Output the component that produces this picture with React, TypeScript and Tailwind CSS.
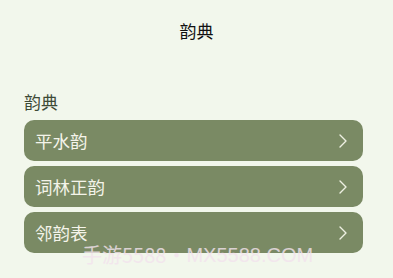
import React from "react";

const items = ["平水韵", "词林正韵", "邻韵表"];

function Chevron() {
  return (
    <svg width="10" height="16" viewBox="0 0 10 16" fill="none" className="shrink-0">
      <path d="M2 2 L8 8 L2 14" stroke="#eef0e2" strokeWidth="1.4" strokeLinecap="round" strokeLinejoin="round" />
    </svg>
  );
}

export default function App() {
  return (
    <div
      className="relative w-[393px] h-[278px] overflow-hidden bg-[#f2f7ec]"
      style={{ fontFamily: '"Noto Sans CJK SC", "Noto Sans", sans-serif' }}
    >
      <div className="h-[62px] flex items-center justify-center">
        <span className="text-[17px] leading-none text-[#111111] mt-[-2px]">韵典</span>
      </div>
      <div className="pl-6 pr-[30px]">
        <div className="h-[58px] flex items-end pb-[10px]">
          <span className="text-[17px] leading-none text-[#3e4a36]">韵典</span>
        </div>
        <div className="flex flex-col gap-[5px]">
          {items.map((t) => (
            <div
              key={t}
              className="h-[41px] rounded-[10px] bg-[#7a8a64] flex items-center justify-between pl-[11px] pr-[15px]"
            >
              <span className="text-[17.5px] leading-none text-[#f4f4ea]">{t}</span>
              <Chevron />
            </div>
          ))}
        </div>
      </div>
      <div
        className="absolute left-[82px] top-[245px] w-[227px] flex justify-between text-[20px] leading-none text-[#f3e3ee] opacity-80 whitespace-nowrap pointer-events-none"
      >
        <span>手游5588</span>
        <span>•</span>
        <span style={{ fontFamily: '"Liberation Sans", sans-serif' }}>MX5588.COM</span>
      </div>
    </div>
  );
}
